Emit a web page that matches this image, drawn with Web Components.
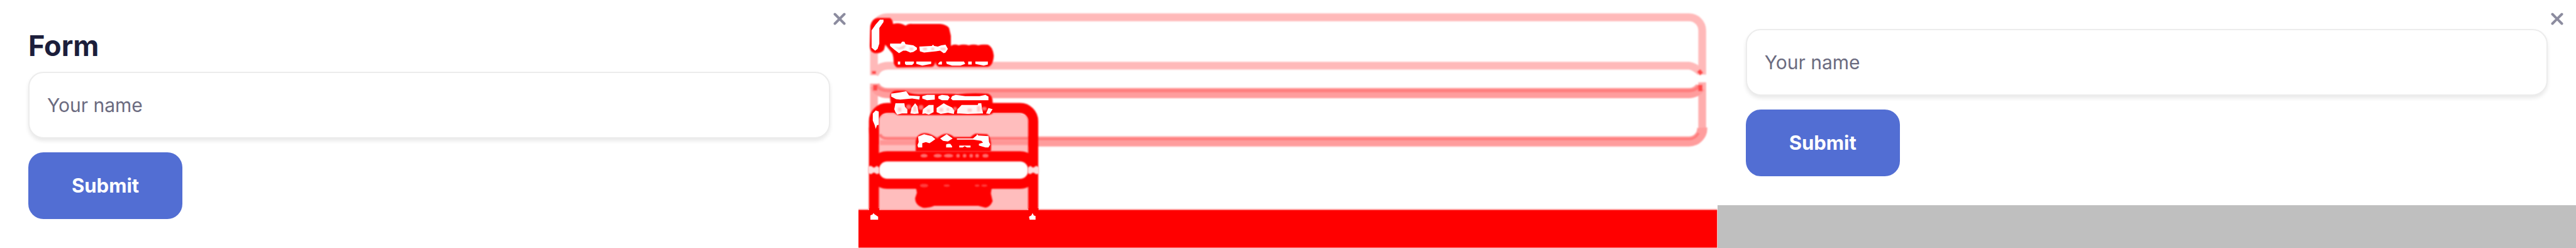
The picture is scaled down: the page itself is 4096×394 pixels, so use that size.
<!DOCTYPE html>
<html lang="en">
<head>
<meta charset="utf-8">
<meta name="viewport" content="width=device-width, initial-scale=1">
<title>Form</title>
<style>
body { margin: 0; background: #fff; font-family: Inter, "Open Sans", sans-serif; }
</style>
</head>
<body>
<compare-view>
  <form-card><form-title slot="title">Form</form-title></form-card>
  <diff-map></diff-map>
  <form-card></form-card>
</compare-view>

<template id="compare-view">
  <style>
    :host { display: grid; grid-template-columns: repeat(3, minmax(0, 1fr)); min-height: 100vh; }
  </style>
  <slot></slot>
</template>

<template id="form-title">
  <style>
    :host { display: block; margin-bottom: 14px; }
    h1 { margin: 0; font-size: 45px; line-height: 54px; font-weight: 700; color: #1c1e3b; }
  </style>
  <h1><slot></slot></h1>
</template>

<template id="form-card">
  <style>
    :host { display: flex; flex-direction: column; background: #bfbfbf; }
    form { position: relative; box-sizing: border-box; padding: 46px 45px; background: #fff; }
    text-field { margin-bottom: 22px; }
    close-button { position: absolute; top: 8px; right: 8px; }
  </style>
  <form>
    <slot name="title"></slot>
    <text-field label="Your name"></text-field>
    <submit-button>Submit</submit-button>
    <close-button></close-button>
  </form>
</template>

<template id="text-field">
  <style>
    :host { display: block; }
    input { display: block; box-sizing: border-box; width: 100%; height: 106px; padding: 0 28px; border: 2px solid #ececec; border-radius: 24px; background: #fff; box-shadow: 0 4px 6px rgba(0,0,0,.09); font: 400 30px/40px Inter, "Open Sans", sans-serif; color: #1c1e3b; }
    input::placeholder { color: #6b6b80; opacity: 1; }
  </style>
  <input type="text">
</template>

<template id="submit-button">
  <style>
    :host { display: block; }
    button { display: block; height: 106px; padding: 0 69px; border: 0; border-radius: 24px; background: #526ed3; color: #fff; font: 700 31px/40px Inter, "Open Sans", sans-serif; }
  </style>
  <button type="button"><slot></slot></button>
</template>

<template id="close-button">
  <style>
    :host { display: block; }
    button { display: grid; place-items: center; width: 44px; height: 44px; padding: 0; border: 0; background: none; }
  </style>
  <button type="button" aria-label="Close">
    <svg width="20" height="20" viewBox="0 0 20 20" fill="none" stroke="#8c8c9f" stroke-width="4" stroke-linecap="round"><path d="M2.5 2.5l15 15M17.5 2.5l-15 15"/></svg>
  </button>
</template>

<template id="diff-map">
  <style>
    :host { display: block; background: #fff; }
    svg { display: block; width: 100%; height: auto; }
  </style>
  <svg viewBox="0 0 1440 416" role="img" aria-label="Difference map">
    <defs>
      <filter id="soft" filterUnits="userSpaceOnUse" x="0" y="0" width="1440" height="416"><feGaussianBlur stdDeviation="1.3"/></filter>
    </defs>
    <!-- Field outlines -->
    <g fill="none" stroke="#ffb9b9" stroke-width="13" filter="url(#soft)">
      <path d="M26 126V51a22 22 0 0 1 22-22H1393a22 22 0 0 1 22 22V125"/>
      <path d="M27 125Q33 110 50 110H1393Q1402 111 1412 121"/>
      <path d="M26 140V214M1415 138V214" stroke="#ffadad"/>
      <path d="M27 143Q33 156 50 156H1393Q1405 156 1412 146" stroke="#ff9d9d" stroke-width="17"/>
      <path d="M30 143Q36 152 50 152H1393Q1405 152 1410 143" stroke="#ff7d7d" stroke-width="5"/>
      <path d="M26 214a22 22 0 0 0 22 23H1393a22 22 0 0 0 22-23" stroke="#ff9d9d" stroke-width="17"/>
      <path d="M290 233H1393Q1403 233 1409 223" stroke="#ff7d7d" stroke-width="4"/>
      <path d="M1409 118L1414 124M1412 142V153M26 119V124M28 142V152" stroke="#ff4a4a" stroke-width="7"/>
    </g>
    <!-- Button outlines -->
    <path d="M34 205Q36 191 50 191H271Q285 193 285 207V352H34Z" fill="#ffbdbd"/>
    <g fill="none" filter="url(#soft)">
      <path d="M36 225Q39 232 48 232H285" stroke="#ff7d7d" stroke-width="5"/>
      <path d="M36 239H285" stroke="#ff9595" stroke-width="8"/>
    </g>
    <rect x="28" y="264" width="263" height="42" rx="20" fill="#fff"/>
    <g fill="none" stroke="#f00" stroke-width="17" filter="url(#soft)">
      <rect x="26" y="181" width="267" height="127" rx="22"/>
      <path d="M26 360V284a22 22 0 0 1 22-22H271a22 22 0 0 1 22 22V360"/>
    </g>
    <g fill="#ffdede" filter="url(#soft)">
      <path d="M16 279L21 278L26 281L31 278L35 281V290L31 292L26 289L21 292L16 290ZM284 281L288 278L293 281L298 278L303 280V291L298 292L293 289L288 292L284 290Z"/>
    </g>
    <path d="M0 350H1440V353H0Z" fill="#ffadad"/>
    <path d="M18 349H35V353H18ZM285 349H302V353H285ZM0 352H1440V415H0Z" fill="#f00"/>
    <!-- Changed text areas -->
    <g fill="#f00" filter="url(#soft)">
      <path d="M19 77L20 43Q23 31 32 30H53Q58 34 58 40Q70 37 79 43Q84 39 90 40H137Q148 41 152 47L155 60V77Q160 73 168 76Q176 73 185 76Q193 73 201 76Q207 74 217 75Q225 78 227 93Q226 110 217 112H135Q129 109 129 103Q128 111 123 112L65 113Q59 110 59 103Q59 96 57 90L45 75L43 83Q40 88 33 89H27Q19 87 19 77Z"/>
      <path d="M53 161Q54 152 65 152H78Q86 158 101 158Q155 156 165 158Q190 155 217 157Q225 160 225 170V190Q220 193 211 193H68Q60 192 58 184Q53 174 53 161Z"/>
      <path d="M96 254V236Q98 224 110 223Q122 223 132 232Q139 224 148 224Q156 225 160 230H188Q194 223 200 224L216 225Q224 231 222 254Z"/>
      <path d="M96 312H224L222 324L225 337Q221 347 213 348L201 345H127Q119 349 108 348Q95 344 95 332L98 323Z"/>
    </g>
    <!-- Cleared spots -->
    <g fill="#fff">
      <path d="M36 33H42V37L35 47V73L32 82L28 85L22 80V51L29 41Z"/>
      <path d="M53 73L71 73L73 70H77L79 74L92 76L98 80V83L92 87L87 88L80 85L75 85L68 89L60 83L53 77Z"/>
      <path d="M102 78L123 77L125 75L127 77L133 78L139 76L146 75L150 82L146 88L143 89L137 85L130 86L110 88L103 86Z"/>
      <path d="M66 103H70V108H66ZM78 103H93V106L90 109H80L78 107ZM97 103H122V107L107 110L97 107ZM137 103H140V108H134V106ZM147 103H177L179 107L171 110H157L148 107ZM184 103H190V108H184ZM196 103H217V108L210 110L196 107Z"/>
      <path d="M55 157L68 155L80 153L85 160L103 161L102 167L90 165L70 167L63 166L55 162Z"/>
      <path d="M107 161L115 159H128V167L115 168L107 165ZM134 161L140 159L150 160L153 163L150 168H140L134 165ZM157 161L163 159L179 161L203 161L213 159L218 162V168H158L155 165Z"/>
      <path d="M24 190L29 185L34 187V209L31 210L29 216L27 209L24 202Z"/>
      <path d="M100 229L110 225L123 228L129 233L122 238L119 240L113 238L107 240V247H100L99 243L101 238Z"/>
      <path d="M137 232L148 225L158 232L150 237L142 236ZM165 232H192L198 227L199 225L201 227L218 228L219 238L221 242L218 247H213L202 244V241L209 239L206 236L192 234H165ZM147 242L150 241H154L157 245V247H147ZM169 244H188V247H182L178 245L175 247H169Z"/>
      <path d="M20 361L24 359L25 357L27 359L33 363V368H20ZM286 363L290 361L292 357L294 361L297 362V368H287Z"/>
    </g>
    <g fill="#fff6f6">
      <path d="M60 183L62 173H77L78 179L82 183V190L73 190L65 192L62 188Z"/>
      <path d="M87 190L89 181L95 173L99 178L101 190L94 191Z"/>
      <path d="M107 191L108 183L118 176H126V188L118 192L112 190Z"/>
      <path d="M131 188V181L143 173L148 176L157 180L161 185L160 191L150 189L138 191Z"/>
      <path d="M165 190L166 183L173 176H200L201 173H206L207 180L209 190L183 191Z"/>
      <path d="M214 190L218 181L225 183L220 191Z"/>
    </g>
    <g fill="#ffcaca" filter="url(#soft)">
      <path d="M60 78L68 83L76 82L80 76L76 76L68 80ZM85 80H92V84H86ZM108 80H115V84H108ZM122 80H127V84H122ZM137 80H146V84H138Z"/>
      <path d="M66 180H72V187H66ZM92 178H97V187H92ZM115 183H120V188H115ZM136 181H142V187H136ZM148 181H152V186H148ZM183 182H190V187H183ZM199 178H204V187H199Z"/>
    </g>
    <g fill="#ff6c6c" filter="url(#soft)">
      <ellipse cx="84" cy="179" rx="4" ry="4"/><ellipse cx="105" cy="180" rx="4" ry="4"/>
      <ellipse cx="162" cy="182" rx="3" ry="3"/><ellipse cx="211" cy="182" rx="4" ry="3"/>
      <ellipse cx="110" cy="261" rx="6" ry="3"/><ellipse cx="133" cy="261" rx="7" ry="3"/>
      <ellipse cx="151" cy="261" rx="8" ry="3"/><ellipse cx="167" cy="261" rx="3" ry="3"/>
      <ellipse cx="178" cy="261" rx="3" ry="3"/><ellipse cx="189" cy="261" rx="3" ry="3"/>
      <ellipse cx="199" cy="261" rx="3" ry="3"/><ellipse cx="213" cy="261" rx="5" ry="3"/>
    </g>
    <g fill="#ff3c3c" filter="url(#soft)">
      <ellipse cx="110" cy="311" rx="7" ry="3"/><ellipse cx="148" cy="311" rx="5" ry="2"/>
      <ellipse cx="199" cy="311" rx="4" ry="2"/><ellipse cx="211" cy="311" rx="5" ry="2"/>
    </g>
  </svg>
</template>

<script>
class TemplateElement extends HTMLElement {
  constructor() {
    super();
    const template = document.getElementById(this.localName);
    this.attachShadow({ mode: "open" }).append(template.content.cloneNode(true));
  }
}

class TextField extends TemplateElement {
  connectedCallback() {
    const input = this.shadowRoot.querySelector("input");
    const label = this.getAttribute("label");
    input.placeholder = label;
    input.setAttribute("aria-label", label);
  }
}

customElements.define("text-field", TextField);
customElements.define("submit-button", class extends TemplateElement {});
customElements.define("close-button", class extends TemplateElement {});
customElements.define("form-title", class extends TemplateElement {});
customElements.define("form-card", class extends TemplateElement {});
customElements.define("diff-map", class extends TemplateElement {});
customElements.define("compare-view", class extends TemplateElement {});
</script>
</body>
</html>
